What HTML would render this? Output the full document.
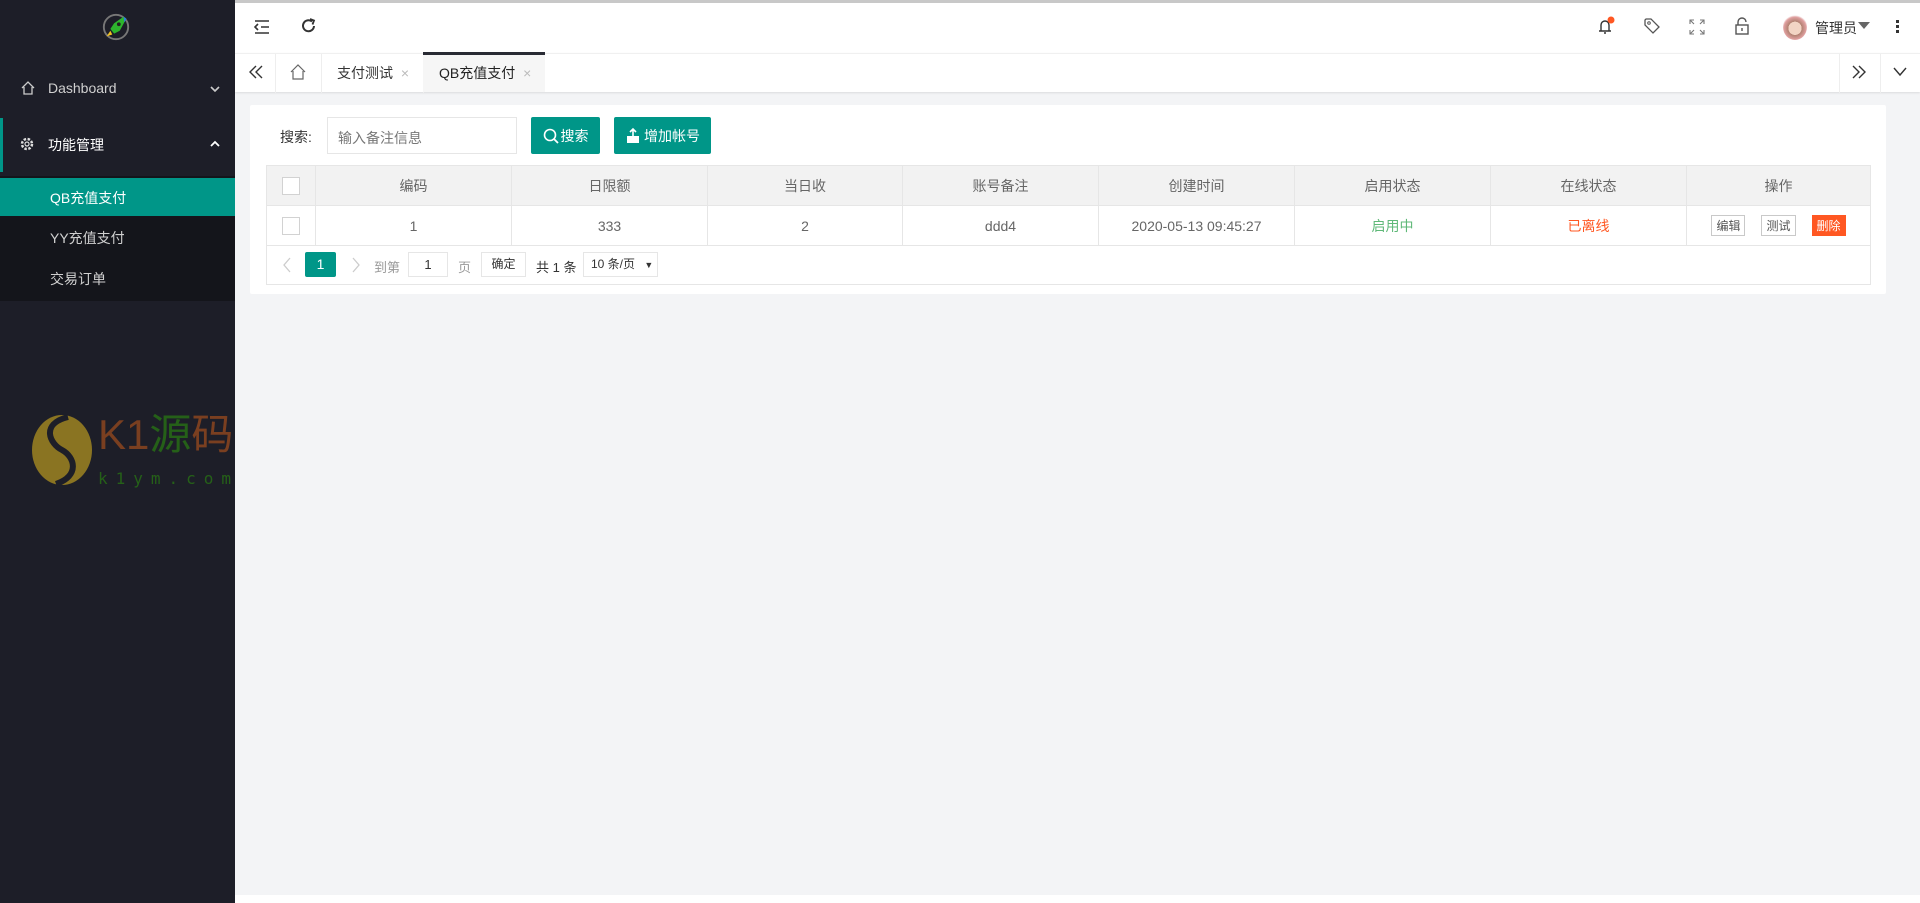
<!DOCTYPE html>
<html><head><meta charset="utf-8"><style>
*{margin:0;padding:0;box-sizing:border-box}
body{width:1920px;height:903px;overflow:hidden;font-family:"Liberation Sans","Noto Sans CJK SC",sans-serif;font-size:14px;color:#666;background:#f3f4f6;position:relative}
.a{position:absolute}
.side{left:0;top:0;width:235px;height:903px;background:#1d1e28}
.sub{left:0;top:176px;width:235px;height:125px;background:#14151b}
.mi{color:#d0d0d0;font-size:14px}
.hdr{left:235px;top:0;width:1685px;height:53px;background:#fff;border-top:3px solid #c8c8c8}
.tabs{left:235px;top:53px;width:1685px;height:39px;background:#fff;border-top:1px solid #f0f0f0;box-shadow:0 1px 2px rgba(0,0,0,.1)}
.vd{top:0;width:1px;height:39px;background:#eee}
.card{left:250px;top:105px;width:1636px;height:189px;background:#fff;border-radius:2px}
.btn{background:#009688;color:#fff;height:37px;border-radius:2px;font-size:14px;display:flex;align-items:center;justify-content:center}
table{border-collapse:collapse;position:absolute;left:266px;top:165px;width:1605px}
td,th{border:1px solid #e6e6e6;height:40px;text-align:center;font-weight:normal;font-size:14px;color:#666}
th{background:#f2f2f2}
.cb{display:inline-block;width:18px;height:18px;border:1px solid #d2d2d2;background:#fff;vertical-align:middle}
.sb{display:inline-block;border:1px solid #c9c9c9;font-size:12px;padding:1px 4px;margin:0 8px;color:#555;background:#fff}
.pg{left:266px;top:245px;width:1605px;height:40px;border:1px solid #e6e6e6;border-top:none}
</style></head><body>
<div class="a side"></div>
<div class="a sub"></div>
<svg class="a" style="left:101px;top:12px" width="30" height="30" viewBox="0 0 32 32"><circle cx="16" cy="16" r="13" fill="none" stroke="#777" stroke-width="2"/><path d="M24 5 L27 7 L20 20 L14 23 L10 18 L14 12Z" fill="#2db52d"/><path d="M24 5 L27 7 L25 11Z" fill="#2a7de1"/><path d="M10 20 L6 26 L12 24Z" fill="#f0c020"/><circle cx="19" cy="13" r="2" fill="#222"/></svg>
<svg class="a" style="left:20px;top:80px" width="16" height="16" viewBox="0 0 16 16"><path d="M2 8 L8 2 L14 8 M4 7 V14 H12 V7" fill="none" stroke="#ccc" stroke-width="1.3"/></svg>
<div class="a mi" style="left:48px;top:80px">Dashboard</div>
<svg class="a" style="left:209px;top:83px" width="12" height="12"><path d="M2 4 L6 8 L10 4" fill="none" stroke="#ccc" stroke-width="1.6"/></svg>
<div class="a" style="left:0;top:118px;width:3px;height:54px;background:#009688"></div>
<svg class="a" style="left:19px;top:136px" width="16" height="16" viewBox="0 0 16 16"><circle cx="8" cy="8" r="5" fill="none" stroke="#ddd" stroke-width="2.5" stroke-dasharray="2.5 1.5"/><circle cx="8" cy="8" r="2" fill="none" stroke="#ddd" stroke-width="1.2"/></svg>
<div class="a" style="left:48px;top:135px;color:#fff;font-size:14px">功能管理</div>
<svg class="a" style="left:209px;top:138px" width="12" height="12"><path d="M2 8 L6 4 L10 8" fill="none" stroke="#fff" stroke-width="1.8"/></svg>
<div class="a" style="left:0;top:178px;width:235px;height:38px;background:#009688"></div>
<div class="a" style="left:50px;top:188px;color:#fff">QB充值支付</div>
<div class="a mi" style="left:50px;top:228px">YY充值支付</div>
<div class="a mi" style="left:50px;top:269px">交易订单</div>
<!-- watermark -->
<svg class="a" style="left:30px;top:414px" width="64" height="72"><ellipse cx="32" cy="36" rx="30" ry="35" fill="#8a7422"/><path d="M38 3 C10 10 20 30 32 36 C45 43 50 62 26 70" fill="none" stroke="#1d1e28" stroke-width="6"/></svg>
<div class="a" style="left:98px;top:412px;font-size:42px;color:#7a3f20;line-height:46px">K1<span style="color:#256018">源</span>码</div>
<div class="a" style="left:98px;top:469px;font-size:16px;color:#256018;letter-spacing:8px;font-family:'DejaVu Sans Mono',monospace">k1ym.com</div>
<!-- header -->
<div class="a hdr"></div>
<svg class="a" style="left:253px;top:18px" width="18" height="18"><path d="M2 3 H16 M8 9 H16 M2 15 H16 M5 6 L2 9 L5 12" fill="none" stroke="#333" stroke-width="1.6"/></svg>
<svg class="a" style="left:300px;top:17px" width="18" height="18"><path d="M14 9 A5.5 5.5 0 1 1 12 4.5" fill="none" stroke="#333" stroke-width="2"/><path d="M10 2 L14 3.5 L12.5 7.5" fill="none" stroke="#333" stroke-width="1.8"/></svg>
<svg class="a" style="left:1595px;top:16px" width="20" height="20"><path d="M4 15 H16 M6 15 V9 A4 4 0 0 1 14 9 V15 M9 17 H11" fill="none" stroke="#333" stroke-width="1.4"/><circle cx="16" cy="4" r="3.5" fill="#ff5722"/></svg>
<svg class="a" style="left:1643px;top:17px" width="18" height="18"><path d="M2 3 L2 8 L10 16 L16 10 L8 2 L3 2Z" fill="none" stroke="#555" stroke-width="1.3"/><circle cx="6" cy="6" r="1.3" fill="none" stroke="#555"/></svg>
<svg class="a" style="left:1689px;top:19px" width="16" height="16"><path d="M1 5 V1 H5 M1 1 L5 5 M11 1 H15 V5 M15 1 L11 5 M1 11 V15 H5 M1 15 L5 11 M15 11 V15 H11 M15 15 L11 11" fill="none" stroke="#777" stroke-width="1.1"/></svg>
<svg class="a" style="left:1734px;top:17px" width="16" height="18"><path d="M4 8 V5 A4 4 0 0 1 12 5" fill="none" stroke="#555" stroke-width="1.4"/><rect x="2" y="8" width="12" height="9" fill="none" stroke="#555" stroke-width="1.4"/><path d="M8 11 V14" stroke="#555" stroke-width="1.4"/></svg>
<div class="a" style="left:1783px;top:14px;width:24px;height:26px;border-radius:50%;background:radial-gradient(circle at 50% 55%,#f2d4c4 35%,#b08070 36%,#e0a0a0 60%,#fff 70%)"></div>
<div class="a" style="left:1815px;top:18px;color:#333;font-size:14px">管理员</div>
<div class="a" style="left:1858px;top:22px;border:6px solid transparent;border-top:7px solid #666"></div>
<div class="a" style="left:1896px;top:20px;width:3px;height:3px;background:#333;box-shadow:0 5px #333,0 10px #333"></div>
<!-- tabs -->
<div class="a tabs">
<div class="a vd" style="left:40px"></div><div class="a vd" style="left:86px"></div><div class="a vd" style="left:188px"></div>
<div class="a vd" style="left:1604px"></div><div class="a vd" style="left:1645px"></div>
<div class="a" style="left:188px;top:-2px;width:122px;height:40px;background:#f6f6f6;border-top:3px solid #292b34"></div>
</div>
<svg class="a" style="left:247px;top:63px" width="18" height="18"><path d="M9 3 L3 9 L9 15 M15 3 L9 9 L15 15" fill="none" stroke="#333" stroke-width="1.4"/></svg>
<svg class="a" style="left:289px;top:63px" width="18" height="18"><path d="M2 9 L9 2 L16 9 M4 8 V16 H14 V8" fill="none" stroke="#666" stroke-width="1.2"/></svg>
<div class="a" style="left:337px;top:63px;color:#333">支付测试 <span style="color:#bbb;margin-left:4px">×</span></div>
<div class="a" style="left:439px;top:63px;color:#222">QB充值支付 <span style="color:#bbb;margin-left:4px">×</span></div>
<svg class="a" style="left:1850px;top:63px" width="18" height="18"><path d="M3 3 L9 9 L3 15 M9 3 L15 9 L9 15" fill="none" stroke="#333" stroke-width="1.4"/></svg>
<svg class="a" style="left:1892px;top:65px" width="16" height="14"><path d="M2 3 L8 10 L14 3" fill="none" stroke="#333" stroke-width="1.4"/></svg>
<!-- content -->
<div class="a card"></div>
<div class="a" style="left:280px;top:127px;color:#333">搜索:</div>
<div class="a" style="left:327px;top:117px;width:190px;height:37px;border:1px solid #e6e6e6;background:#fff;padding:10px 10px;color:#777">输入备注信息</div>
<div class="a btn" style="left:531px;top:117px;width:69px"><svg width="16" height="18" style="margin-right:2px"><circle cx="7" cy="8" r="5.5" fill="none" stroke="#fff" stroke-width="1.6"/><path d="M11 12 L15 16" stroke="#fff" stroke-width="1.8"/></svg>搜索</div>
<div class="a btn" style="left:614px;top:117px;width:97px"><svg width="16" height="18" style="margin-right:3px"><rect x="2" y="9" width="12" height="7" fill="#fff"/><path d="M8 9 V3 M5 5 L8 2 L11 5" fill="none" stroke="#fff" stroke-width="1.6"/></svg>增加帐号</div>
<table>
<tr><th style="width:49px"><span class="cb"></span></th><th style="width:196px">编码</th><th style="width:196px">日限额</th><th style="width:195px">当日收</th><th style="width:196px">账号备注</th><th style="width:196px">创建时间</th><th style="width:196px">启用状态</th><th style="width:196px">在线状态</th><th>操作</th></tr>
<tr><td><span class="cb"></span></td><td>1</td><td>333</td><td>2</td><td>ddd4</td><td>2020-05-13 09:45:27</td><td style="color:#5fb878">启用中</td><td style="color:#ff5722">已离线</td><td><span class="sb">编辑</span><span class="sb">测试</span><span class="sb" style="background:#ff5722;border-color:#ff5722;color:#fff">删除</span></td></tr>
</table>
<div class="a pg"></div>
<svg class="a" style="left:281px;top:256px" width="12" height="18"><path d="M9 2 L3 9 L9 16" fill="none" stroke="#ccc" stroke-width="1.3"/></svg>
<div class="a" style="left:305px;top:252px;width:31px;height:25px;background:#009688;color:#fff;text-align:center;line-height:25px;border-radius:2px">1</div>
<svg class="a" style="left:350px;top:256px" width="12" height="18"><path d="M3 2 L9 9 L3 16" fill="none" stroke="#ccc" stroke-width="1.3"/></svg>
<div class="a" style="left:374px;top:257px;color:#999;font-size:13px">到第</div>
<div class="a" style="left:408px;top:252px;width:40px;height:25px;border:1px solid #e6e6e6;text-align:center;line-height:23px;color:#333;font-size:13px">1</div>
<div class="a" style="left:458px;top:257px;color:#999;font-size:13px">页</div>
<div class="a" style="left:481px;top:252px;width:45px;height:25px;border:1px solid #e6e6e6;text-align:center;line-height:23px;color:#333;font-size:12px">确定</div>
<div class="a" style="left:536px;top:257px;color:#333;font-size:13px">共 1 条</div>
<div class="a" style="left:583px;top:252px;width:75px;height:25px;border:1px solid #e6e6e6;line-height:23px;color:#333;font-size:12px;padding-left:7px">10 条/页 <span style="font-size:9px;margin-left:6px">▼</span></div>
<div class="a" style="left:235px;top:895px;width:1685px;height:8px;background:#fff"></div>
</body></html>
